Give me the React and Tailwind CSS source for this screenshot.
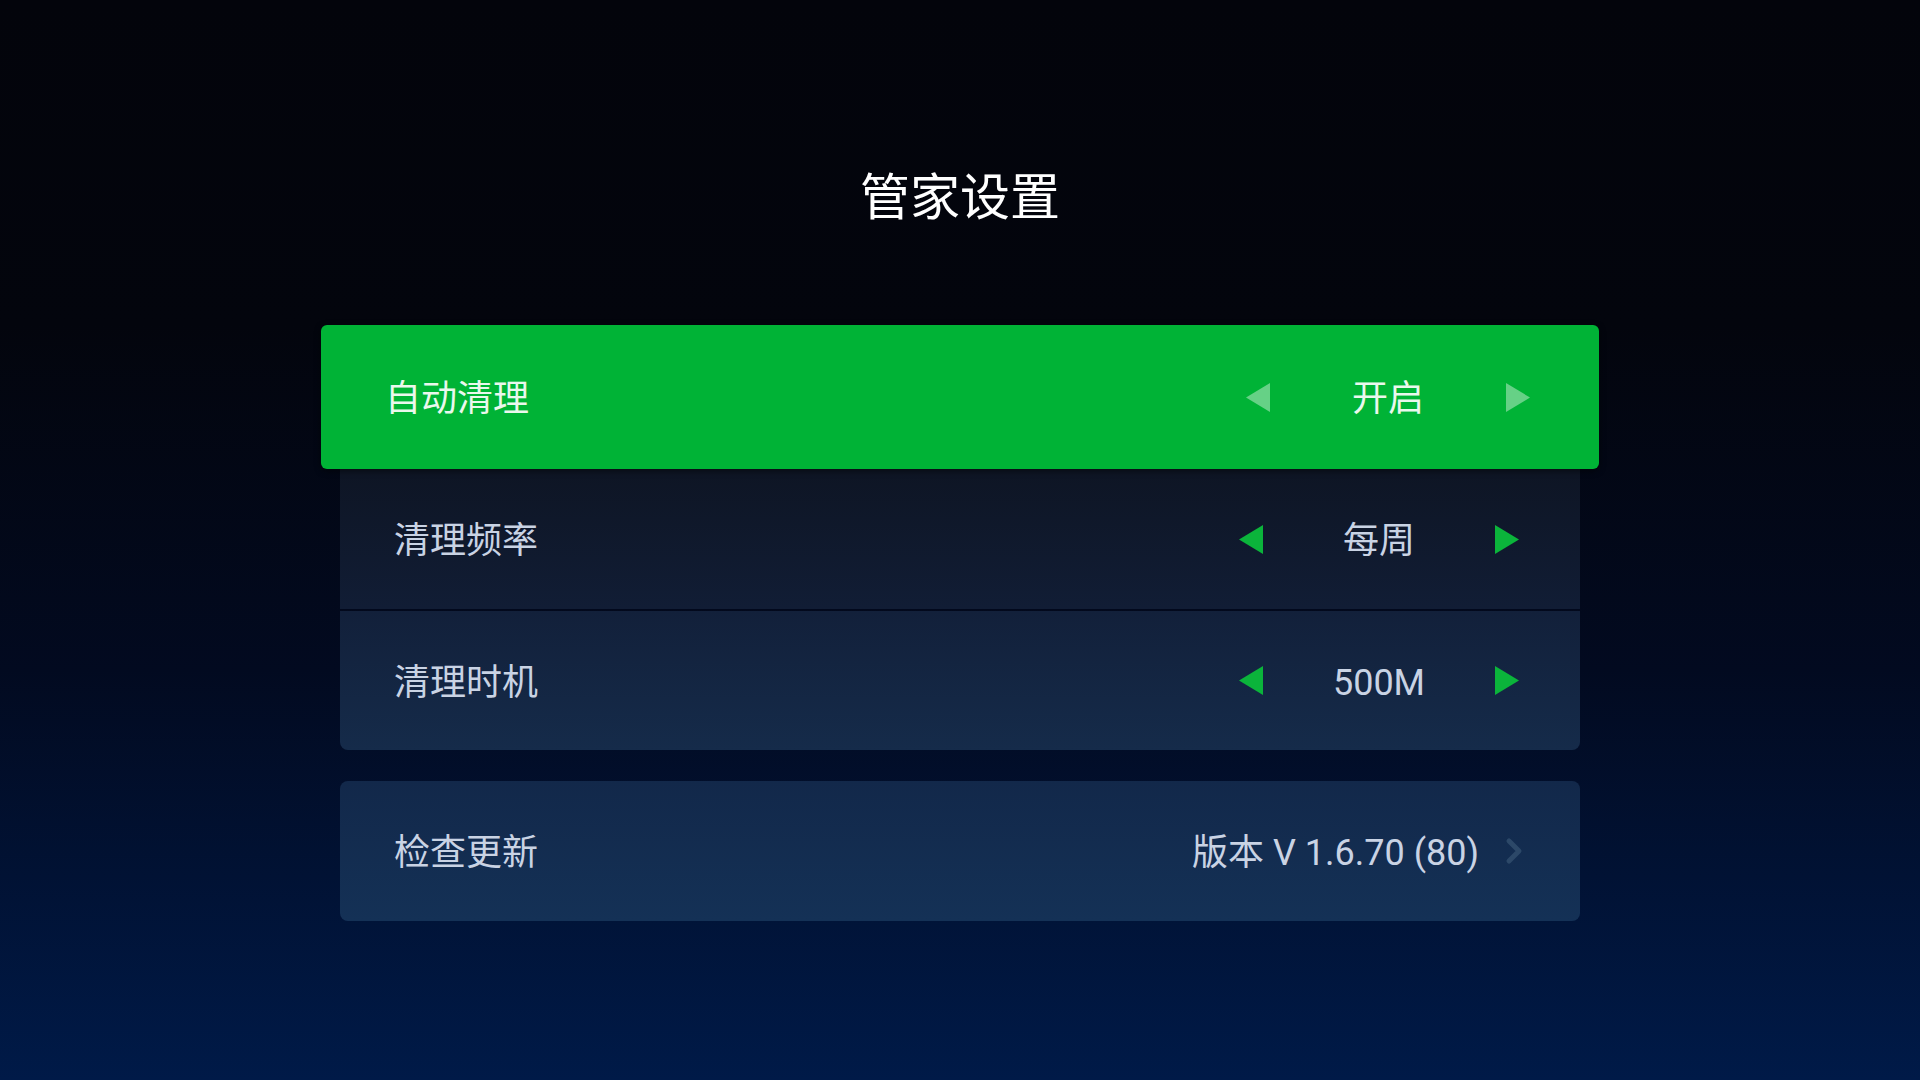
const font = { fontFamily: 'Roboto, "Noto Sans CJK SC", sans-serif' };

function Arrow({ dir, className }) {
    return (
        <svg width="24" height="29" viewBox="0 0 24 29" className={className}>
            {dir === "left" ? (
                <path d="M24 0 L0 14.5 L24 29 Z" fill="currentColor" />
            ) : (
                <path d="M0 0 L24 14.5 L0 29 Z" fill="currentColor" />
            )}
        </svg>
    );
}

function Picker({ value, active }) {
    return (
        <div className={`flex items-center justify-between ${active ? "w-[284px]" : "w-[280px]"}`}>
            <Arrow dir="left" className={active ? "text-white/40" : "text-[#0bb43b]"} />
            <span className={`pt-[4px] text-[36px] leading-none ${active ? "text-[#eaf8ed]" : "text-[#c9d3e4]"}`}>
                {value}
            </span>
            <Arrow dir="right" className={active ? "text-white/40" : "text-[#0bb43b]"} />
        </div>
    );
}

export default function App() {
    return (
        <div
            className="min-h-screen w-full bg-[linear-gradient(to_bottom,#03040b_0%,#03050d_30%,#020a20_62%,#001a48_100%)]"
            style={font}
        >
            <div className="mx-auto flex w-[1240px] flex-col pt-[173px]">
                <h1 className="text-center text-[50px] font-normal leading-[50px] text-white">
                    管家设置
                </h1>

                {/* focused row */}
                <div className="relative z-10 -mx-[19px] mt-[102px] flex h-[144px] items-center justify-between rounded-md bg-[#00b336] pl-[64px] pr-[69px] shadow-[0_2px_6px_rgba(0,0,0,0.5)]">
                    <span className="pt-[4px] text-[36px] leading-none text-[#eaf8ed]">自动清理</span>
                    <Picker value="开启" active />
                </div>

                <div className="flex h-[140px] items-center justify-between bg-[linear-gradient(to_bottom,#0e1524,#111d35)] pl-[54px] pr-[61px]">
                    <span className="pt-[4px] text-[36px] leading-none text-[#c9d3e4]">清理频率</span>
                    <Picker value="每周" />
                </div>

                <div className="mt-[2px] flex h-[139px] items-center justify-between rounded-b-lg bg-[linear-gradient(to_bottom,#12203a,#152b4a)] pl-[54px] pr-[61px]">
                    <span className="pt-[4px] text-[36px] leading-none text-[#c9d3e4]">清理时机</span>
                    <Picker value="500M" />
                </div>

                <div className="mt-[31px] flex h-[140px] items-center justify-between rounded-lg bg-[linear-gradient(to_bottom,#12284a,#143156)] pl-[54px] pr-[56px]">
                    <span className="pt-[4px] text-[36px] leading-none text-[#c9d3e4]">检查更新</span>
                    <div className="flex items-center gap-[26px]">
                        <span className="pt-[4px] text-[36px] leading-none text-[#c9d3e4]">版本 V 1.6.70 (80)</span>
                        <svg width="19" height="28" viewBox="0 0 19 28" className="text-[#2c4868]">
                            <path
                                d="M4 4 L14 14 L4 24"
                                fill="none"
                                stroke="currentColor"
                                strokeWidth="5"
                                strokeLinecap="round"
                                strokeLinejoin="round"
                            />
                        </svg>
                    </div>
                </div>
            </div>
        </div>
    );
}
